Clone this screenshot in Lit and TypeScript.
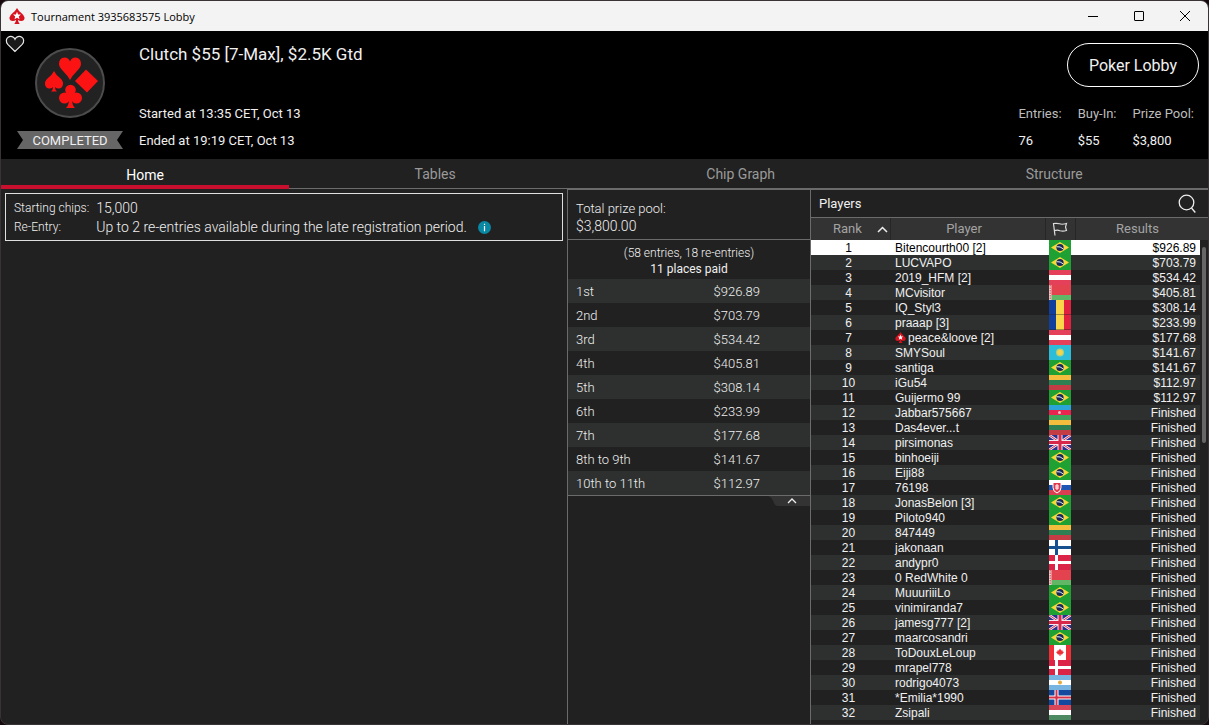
import { LitElement, html, svg, css } from "lit";
import { customElement, property } from "lit/decorators.js";
import { classMap } from "lit/directives/class-map.js";

type Player = { name: string; flag: string; result: string; star?: boolean };

const paid = ["$926.89", "$703.79", "$534.42", "$405.81", "$308.14", "$233.99", "$177.68", "$141.67", "$141.67", "$112.97", "$112.97"];

const players: Player[] = (
  [
    ["Bitencourth00 [2]", "br"], ["LUCVAPO", "br"], ["2019_HFM [2]", "at"], ["MCvisitor", "by"],
    ["IQ_Styl3", "ro"], ["praaap [3]", "ro"], ["peace&loove [2]", "at"], ["SMYSoul", "kz"],
    ["santiga", "br"], ["iGu54", "lt"], ["Guijermo 99", "br"], ["Jabbar575667", "az"],
    ["Das4ever...t", "lt"], ["pirsimonas", "gb"], ["binhoeiji", "br"], ["Eiji88", "br"],
    ["76198", "sk"], ["JonasBelon [3]", "br"], ["Piloto940", "br"], ["847449", "lt"],
    ["jakonaan", "fi"], ["andypr0", "dk"], ["0 RedWhite 0", "by"], ["MuuuriiiLo", "br"],
    ["vinimiranda7", "br"], ["jamesg777 [2]", "gb"], ["maarcosandri", "br"], ["ToDouxLeLoup", "ca"],
    ["mrapel778", "dk"], ["rodrigo4073", "ar"], ["*Emilia*1990", "is"], ["Zsipali", "hu"],
  ] as [string, string][]
).map(([name, flag], i) => ({ name, flag, result: paid[i] ?? "Finished", star: i === 6 }));

const prizes: [string, string][] = [
  ["1st", "$926.89"], ["2nd", "$703.79"], ["3rd", "$534.42"], ["4th", "$405.81"], ["5th", "$308.14"],
  ["6th", "$233.99"], ["7th", "$177.68"], ["8th to 9th", "$141.67"], ["10th to 11th", "$112.97"],
];

const bands = (a: string, b: string, c: string) =>
  svg`<rect width="22" height="5" fill=${a} /><rect y="5" width="22" height="5" fill=${b} /><rect y="10" width="22" height="5" fill=${c} />`;

const flags: Record<string, unknown> = {
  br: svg`<rect width="22" height="15" fill="#1ea032" /><path d="M11 2l9 5.500-9 5.500-9-5.500z" fill="#f5d93b" /><circle cx="11" cy="7.500" r="3.600" fill="#14285f" /><path d="M7.600 6.700q3.800-.5 6.600 2.200" fill="none" stroke="#e8eef0" stroke-width="1" />`,
  at: bands("#e5405a", "#fff", "#e5405a"),
  hu: bands("#d9465a", "#fff", "#4d8a62"),
  lt: bands("#f3bd3e", "#2e8053", "#c43c44"),
  az: svg`${bands("#2ba5d8", "#e8244f", "#3fa35c")}<circle cx="10.500" cy="7.500" r="1.500" fill="#f9b9c6" />`,
  by: svg`<rect width="22" height="10" fill="#e2434f" /><rect y="10" width="22" height="5" fill="#62b766" /><rect width="2.500" height="15" fill="#f2d4d4" /><path d="M1.200 0v15" stroke="#dc5560" stroke-width="1.200" stroke-dasharray="1.500 1" />`,
  ro: svg`<rect width="7" height="15" fill="#123f9e" /><rect x="7" width="8" height="15" fill="#fbd64a" /><rect x="15" width="7" height="15" fill="#e0213f" /><path d="M0 14.500h22" stroke="#222" stroke-opacity=".4" />`,
  kz: svg`<rect width="22" height="15" fill="#2dbdd8" /><circle cx="11" cy="7.500" r="4" fill="#a9cf86" /><circle cx="11" cy="7.500" r="2.800" fill="#f3d54d" />`,
  gb: svg`<rect width="22" height="15" fill="#2b2f8f" /><path d="M0 0l22 15M22 0L0 15" stroke="#f3e9f2" stroke-width="2.600" /><path d="M0 0l22 15M22 0L0 15" stroke="#d9304f" stroke-width="1" /><path d="M11 0v15M0 7.500h22" stroke="#f3e9f2" stroke-width="5" /><path d="M11 0v15M0 7.500h22" stroke="#d8284a" stroke-width="3" />`,
  sk: svg`${bands("#fff", "#1f55b4", "#d93f51")}<path d="M4 2.500h8v5q0 4-4 5.500-4-1.500-4-5.500z" fill="#e0394d" stroke="#fff" /><path d="M8 4v6M6 6h4M6 8h4" stroke="#fff" />`,
  fi: svg`<rect width="22" height="15" fill="#fff" /><path d="M7.500 0v15M0 7.500h22" stroke="#17508f" stroke-width="3" />`,
  dk: svg`<rect width="22" height="15" fill="#dc2448" /><path d="M7.500 0v15M0 7.500h22" stroke="#fff" stroke-width="3" />`,
  is: svg`<rect width="22" height="15" fill="#1549a0" /><path d="M7.500 0v15M0 7.500h22" stroke="#fff" stroke-width="4" /><path d="M7.500 0v15M0 7.500h22" stroke="#d8324a" stroke-width="2" />`,
  ca: svg`<rect width="22" height="15" fill="#fff" /><path d="M0 0h5v15H0zM17 0h5v15h-5z" fill="#ee3038" /><path d="M11 3.500l1.200 2 1.300-.3v1.300l1.500.6-2 2.400h-1.500v1.500h-1V9.500H9L7 7.100l1.500-.6V5.200l1.300.3z" fill="#ee3038" />`,
  ar: svg`${bands("#78b4e2", "#fff", "#78b4e2")}<circle cx="11" cy="7.500" r="2" fill="#e3ab45" />`,
};

const spade = svg`<path d="M8 0q1.300 2.600 4.300 5Q15.600 7.600 15.600 9.800q-.2 3.300-3.400 3.300-1.900 0-3.300-1.300.2 2.600 1.800 4.200H5.300q1.600-1.600 1.800-4.200-1.400 1.300-3.300 1.300Q.6 13.100.4 9.800.4 7.600 3.700 5 6.700 2.600 8 0z" fill="#d8131f" /><path d="M8 3.800l1.100 2.600 2.800.2-2.100 1.900.7 2.700L8 9.800l-2.500 1.400.7-2.700-2.100-1.900 2.800-.2z" fill="#fff" />`;

@customElement("country-flag")
class CountryFlag extends LitElement {
  @property() code = "";
  static styles = css`
    :host { display: block; height: 15px; }
    svg { display: block; width: 22px; height: 15px; margin: 0 auto; }
  `;
  render() {
    return html`<svg viewBox="0 0 22 15" aria-hidden="true">${flags[this.code]}</svg>`;
  }
}

@customElement("prize-panel")
class PrizePanel extends LitElement {
  static styles = css`
    :host { display: block; font-weight: 300; }
    .total { height: 50px; box-sizing: border-box; padding: 10px 8px 0; border-bottom: 1px solid #6b6b6b; }
    .total div { line-height: 18px; font-size: 14px; }
    .total .label { font-size: 13px; line-height: 17px; }
    .summary { padding: 5px 28px 2px; text-align: center; font-size: 12px; line-height: 16px; }
    .paid { font-weight: 400; }
    table { width: 100%; border-collapse: collapse; border-bottom: 1px solid #6b6b6b; font-size: 13px; }
    tr { height: 24px; }
    tr:nth-child(odd) { background: #2d302f; }
    th, td { padding: 1px 0 0 8px; text-align: left; font-weight: 300; line-height: 23px; }
    td { width: 50px; padding: 1px 50px 0 0; text-align: right; }
    .fold { display: block; margin-left: auto; width: 42px; height: 11px; padding: 0; border: 0; background: none; }
    .fold svg { display: block; }
  `;
  render() {
    return html`
      <div class="total"><div class="label">Total prize pool:</div><div>$3,800.00</div></div>
      <div class="summary">
        <div>(58 entries, 18 re-entries)</div>
        <div class="paid">11 places paid</div>
      </div>
      <table>
        <tbody>
          ${prizes.map(([place, amount]) => html`<tr><th scope="row">${place}</th><td>${amount}</td></tr>`)}
        </tbody>
      </table>
      <button class="fold" aria-label="Collapse prizes">
        <svg width="42" height="11" viewBox="0 0 42 11">
          <path d="M0 0h42v10H10q-3 0-4-3-2-6-6-7z" fill="#333" />
          <path d="M20 7l4-4 4 4" fill="none" stroke="#eee" stroke-width="1.300" />
        </svg>
      </button>
    `;
  }
}

@customElement("players-panel")
class PlayersPanel extends LitElement {
  static styles = css`
    :host { display: block; }
    .top { display: flex; align-items: center; justify-content: space-between; height: 27px; padding: 0 11px 0 8px; border-bottom: 1px solid #6b6b6b; font-size: 13px; }
    .search { display: block; padding: 0; border: 0; background: none; height: 20px; }
    .search svg { display: block; }
    .list { display: grid; grid-template-columns: minmax(0, 1fr) 8px; }
    table { width: 100%; table-layout: fixed; border-collapse: collapse; font: 12px/14px "Liberation Sans", Arial, sans-serif; }
    .c-rank { width: 79px; }
    .c-player { width: 155px; }
    .c-flag { width: 30px; }
    thead th { height: 22px; padding: 0; background: #333; color: #a3a3a3; font-family: Roboto, sans-serif; font-size: 13px; font-weight: 400; }
    thead th + th { box-shadow: inset 1px 0 #262626; }
    thead .player { padding-right: 7px; }
    thead svg { display: block; margin: 0 auto; }
    .sort { display: flex; align-items: center; justify-content: space-between; padding: 0 2px 0 22px; }
    .sort svg { margin: 0; }
    td { height: 14px; padding: 1px 0 0; white-space: nowrap; }
    .flag { padding: 0; }
    tbody tr:nth-child(even) { background: #2d302f; }
    tbody tr.selected { background: #fff; color: #000; }
    .rank { text-align: center; padding-right: 4px; }
    .name { padding-left: 5px; }
    .name svg { margin-right: 2px; vertical-align: -1px; }
    .result { text-align: right; padding-right: 4px; }
    .bar { display: flex; flex-direction: column; align-items: center; }
    .cap { width: 100%; height: 22px; margin-bottom: 7px; background: #333; }
    .thumb { width: 4px; height: 196px; border-radius: 2px; background: #666; }
  `;
  render() {
    return html`
      <div class="top">
        <span>Players</span>
        <button class="search" aria-label="Search players">
          <svg width="20" height="20" viewBox="0 0 20 20" fill="none" stroke="#eee" stroke-width="1.300"><circle cx="9.500" cy="8.500" r="7.300" /><path d="M14.500 14l3.800 4.500" /></svg>
        </button>
      </div>
      <div class="list">
        <table>
          <colgroup><col class="c-rank" /><col class="c-player" /><col class="c-flag" /><col /></colgroup>
          <thead>
            <tr>
              <th scope="col"><div class="sort">Rank<svg width="11" height="7" viewBox="0 0 11 7"><path d="M1 6l4.500-4.500L10 6" fill="none" stroke="#eee" stroke-width="1.500" /></svg></div></th>
              <th scope="col" class="player">Player</th>
              <th scope="col" aria-label="Country"><svg width="16" height="14" viewBox="0 0 16 14" fill="none" stroke="#ddd" stroke-width="1.200"><path d="M3 13.500L1.500 1.500Q5 1 7.500 1.800 10 2.800 14.500 1.500L13.500 5l1 3.500Q11 9.600 8 8.700 5.500 7.800 2.500 8.600" /></svg></th>
              <th scope="col">Results</th>
            </tr>
          </thead>
          <tbody>
            ${players.map(
              (p, i) => html`<tr class=${classMap({ selected: i === 0 })}>
                <td class="rank">${i + 1}</td>
                <td class="name">${p.star ? html`<svg width="11" height="11" viewBox="0 0 16 16">${spade}</svg>` : ""}${p.name}</td>
                <td class="flag"><country-flag code=${p.flag}></country-flag></td>
                <td class="result">${p.result}</td>
              </tr>`
            )}
          </tbody>
        </table>
        <div class="bar"><div class="cap"></div><div class="thumb"></div></div>
      </div>
    `;
  }
}

@customElement("app-root")
class AppRoot extends LitElement {
  static styles = css`
    :host { display: block; background: #16090d; color: #f0f0f0; font-family: Roboto, sans-serif; }
    .window { display: flex; flex-direction: column; box-sizing: border-box; min-height: 100vh; border: 1px solid #3a3335; border-radius: 8px; overflow: hidden; background: #212121; }
    button { color: inherit; font-family: inherit; cursor: pointer; }
    .titlebar { display: flex; align-items: center; height: 30px; background: #f3f3f3; color: #000; font: 11px "Open Sans", "Noto Sans", sans-serif; }
    .titlebar .icon { margin: 0 6px 0 8px; }
    .titlebar .name { flex: 1; }
    .titlebar button { display: flex; align-items: center; justify-content: center; width: 46px; height: 30px; padding: 0; border: 0; background: none; }
    .header { display: flex; height: 128px; background: #000; }
    .badge { position: relative; display: flex; flex-direction: column; align-items: center; width: 138px; padding-top: 17px; box-sizing: border-box; }
    .fav { position: absolute; left: 4px; top: 4px; padding: 0; border: 0; background: none; }
    .fav svg, .logo { display: block; }
    .status { display: flex; justify-content: center; width: 106px; margin-top: 13px; padding-top: 1px; background: #666; font-size: 13px; line-height: 17px; clip-path: polygon(0 0, 100% 0, calc(100% - 6px) 50%, 100% 100%, 0 100%, 6px 50%); }
    .info { flex: 1; display: flex; flex-direction: column; font-size: 13px; line-height: 27px; }
    h1 { flex: 1; margin: 0; padding-top: 13px; font-size: 17px; line-height: 20px; font-weight: 400; }
    .info p { margin: 0; }
    .info p:last-child { padding-bottom: 5px; }
    .side { display: flex; flex-direction: column; align-items: flex-end; padding: 12px 9px 5px 0; }
    .lobby { width: 132px; height: 44px; border: 1px solid #fff; border-radius: 22px; background: #000; font-size: 16px; }
    .stats { display: flex; gap: 16px; margin: auto 5px 0 0; font-size: 13px; line-height: 27px; }
    .stats dt { color: #bdbdbd; }
    .stats dd { margin: 0; }
    .tabs { display: flex; height: 30px; box-sizing: border-box; border-bottom: 1px solid #6b6b6b; }
    .tabs button { flex: 1 1 auto; padding: 0; border: 0; background: none; color: #9a9a9a; font-size: 14px; }
    .tabs .active { color: #fff; margin-bottom: -1px; padding-top: 6px; border-bottom: 4px solid #c8102e; }
    .main { flex: 1; display: grid; grid-template-columns: minmax(0, 1fr) 242px 397px; column-gap: 1px; }
    .main > * { box-shadow: -1px 0 #6b6b6b; }
    prize-panel, players-panel { border-top: 1px solid #6b6b6b; }
    .main > .home { box-shadow: none; padding: 4px; }
    .rules { display: grid; grid-template-columns: auto 1fr; column-gap: 7px; align-items: center; margin: 0; padding: 5px 8px 3px; border: 1px solid #e0e0e0; font-weight: 300; line-height: 19px; }
    .rules dt { font-size: 12px; }
    .rules dd { margin: 0; display: flex; align-items: center; gap: 11px; font-size: 14px; }
  `;
  render() {
    return html`
      <div class="window">
        <div class="titlebar">
          <svg class="icon" width="16" height="16" viewBox="0 0 16 16">${spade}</svg>
          <span class="name">Tournament 3935683575 Lobby</span>
          <button aria-label="Minimize"><svg width="10" height="10" viewBox="0 0 10 10"><path d="M0 5.500h10" stroke="#000" /></svg></button>
          <button aria-label="Maximize"><svg width="10" height="10" viewBox="0 0 10 10"><rect x=".5" y=".5" width="9" height="9" rx=".5" fill="none" stroke="#000" /></svg></button>
          <button aria-label="Close"><svg width="10" height="10" viewBox="0 0 10 10"><path d="M0 0l10 10M10 0L0 10" stroke="#000" /></svg></button>
        </div>
        <header class="header">
          <div class="badge">
            <button class="fav" aria-label="Favourite"><svg width="20" height="18" viewBox="0 0 20 18"><path d="M10 16.500L2.800 9.300C.6 7 1 3.500 3.200 2.200 5.800.6 8.800 1.700 10 4.300c1.200-2.600 4.200-3.700 6.800-2.100C19 3.500 19.400 7 17.200 9.300z" fill="#1a1a1a" stroke="#e8e8e8" stroke-width="1.200" /></svg></button>
            <svg class="logo" width="70" height="70" viewBox="0 0 70 70" fill="#fb1313">
              <circle cx="35" cy="35" r="34" fill="#222" stroke="#4c4c4c" stroke-width="2" />
              <path d="M35 32q-2-4-7-9-4-4-4-7 0-6 5.500-6.500 4 0 5.500 4 1.500-4 5.500-4 5.500.5 5.500 6.500 0 3-4 7-5 5-7 9z" />
              <path d="M51 21.500L63 33 52 44.500 40 33z" />
              <path d="M19 23q2 4 6 7 3.500 3 3 6.500-1 4.500-5 4-2-.3-3-1.500 0 3 2 4.500h-6q2-1.500 2-4.500-1 1.200-3 1.500-4 .5-5-4-.5-3.500 3-6.500 4-3 6-7z" />
              <circle cx="35.500" cy="42" r="5.300" /><circle cx="29.500" cy="50" r="5.500" /><circle cx="41.500" cy="50" r="5.500" />
              <path d="M34 45h3v7q.5 6 3 8h-9q2.500-2 3-8z" />
            </svg>
            <div class="status">COMPLETED</div>
          </div>
          <div class="info">
            <h1>Clutch $55 [7-Max], $2.5K Gtd</h1>
            <p>Started at 13:35 CET, Oct 13</p>
            <p>Ended at 19:19 CET, Oct 13</p>
          </div>
          <div class="side">
            <button class="lobby">Poker Lobby</button>
            <dl class="stats">
              <div><dt>Entries:</dt><dd>76</dd></div>
              <div><dt>Buy-In:</dt><dd>$55</dd></div>
              <div><dt>Prize Pool:</dt><dd>$3,800</dd></div>
            </dl>
          </div>
        </header>
        <nav class="tabs">
          <button class="active" aria-current="page">Home</button>
          <button>Tables</button>
          <button>Chip Graph</button>
          <button>Structure</button>
        </nav>
        <div class="main">
          <section class="home">
            <dl class="rules">
              <dt>Starting chips:</dt><dd>15,000</dd>
              <dt>Re-Entry:</dt>
              <dd>Up to 2 re-entries available during the late registration period.
                <svg width="13" height="13" viewBox="0 0 13 13" role="img" aria-label="Info"><circle cx="6.500" cy="6.500" r="6.500" fill="#0a87a3" /><path d="M6.500 5v5.300M6.500 2.700v1.300" stroke="#fff" stroke-width="1.200" /></svg>
              </dd>
            </dl>
          </section>
          <prize-panel></prize-panel>
          <players-panel></players-panel>
        </div>
      </div>
    `;
  }
}
